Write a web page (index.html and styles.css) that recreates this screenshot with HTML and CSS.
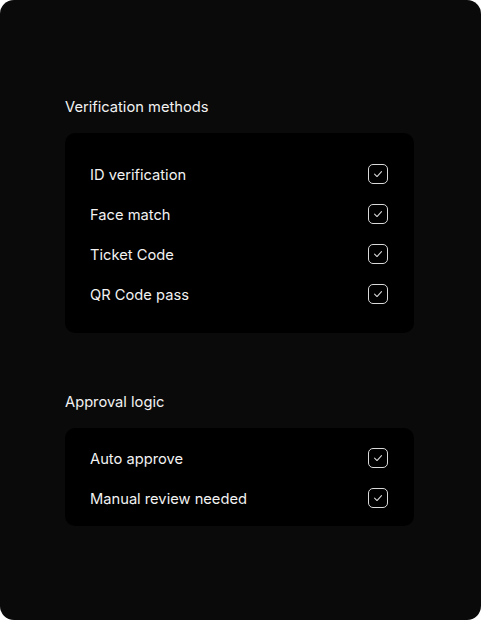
FILE: index.html
```html
<!DOCTYPE html>
<html lang="en">
<head>
<meta charset="utf-8">
<link rel="stylesheet" href="styles.css">
</head>
<body>
<main class="card">
  <section class="group group-verify">
    <h2 class="heading">Verification methods</h2>
    <ul class="panel panel-verify">
      <li class="row"><span class="label">ID verification</span><span class="check"><svg viewBox="0 0 20 20"><path d="M6.2 10.2 L8.9 12.8 L13.9 7.3"/></svg></span></li>
      <li class="row"><span class="label">Face match</span><span class="check"><svg viewBox="0 0 20 20"><path d="M6.2 10.2 L8.9 12.8 L13.9 7.3"/></svg></span></li>
      <li class="row"><span class="label">Ticket Code</span><span class="check"><svg viewBox="0 0 20 20"><path d="M6.2 10.2 L8.9 12.8 L13.9 7.3"/></svg></span></li>
      <li class="row"><span class="label">QR Code pass</span><span class="check"><svg viewBox="0 0 20 20"><path d="M6.2 10.2 L8.9 12.8 L13.9 7.3"/></svg></span></li>
    </ul>
  </section>
  <section class="group group-approval">
    <h2 class="heading">Approval logic</h2>
    <ul class="panel panel-approval">
      <li class="row"><span class="label">Auto approve</span><span class="check"><svg viewBox="0 0 20 20"><path d="M6.2 10.2 L8.9 12.8 L13.9 7.3"/></svg></span></li>
      <li class="row"><span class="label">Manual review needed</span><span class="check"><svg viewBox="0 0 20 20"><path d="M6.2 10.2 L8.9 12.8 L13.9 7.3"/></svg></span></li>
    </ul>
  </section>
</main>
</body>
</html>
```

FILE: styles.css
```css
html, body {
  margin: 0;
  padding: 0;
  background: #ffffff;
}
body {
  font-family: Inter, "Liberation Sans", sans-serif;
  -webkit-font-smoothing: antialiased;
}
.card {
  box-sizing: border-box;
  width: 481px;
  height: 620px;
  background: #0a0a0a;
  border-radius: 14px;
  padding: 97px 67px 0 65px;
  color: #f2f2f2;
}
.group {
  display: flex;
  flex-direction: column;
}
.group-approval {
  margin-top: 59px;
}
.heading {
  margin: 0;
  font-size: 14.7px;
  font-weight: 400;
  line-height: 20px;
  letter-spacing: 0;
  color: #f2f2f2;
}
.panel {
  list-style: none;
  margin: 16px 0 0;
  background: #000000;
  border-radius: 10px;
  display: flex;
  flex-direction: column;
}
.panel-verify {
  padding: 21px 26px 19px 25px;
}
.panel-approval {
  padding: 10px 26px 8px 25px;
}
.row {
  height: 40px;
  display: flex;
  align-items: center;
  justify-content: space-between;
  font-size: 14.7px;
  letter-spacing: 0;
  color: #f2f2f2;
}
.label {
  padding-top: 2px;
}
.check {
  box-sizing: border-box;
  width: 20px;
  height: 20px;
  border: 1.3px solid #d9d9d9;
  border-radius: 5px;
  display: flex;
  align-items: center;
  justify-content: center;
}
.check svg {
  width: 18px;
  height: 18px;
  fill: none;
  stroke: #d9d9d9;
  stroke-width: 1.2;
  stroke-linecap: round;
  stroke-linejoin: round;
}
```
